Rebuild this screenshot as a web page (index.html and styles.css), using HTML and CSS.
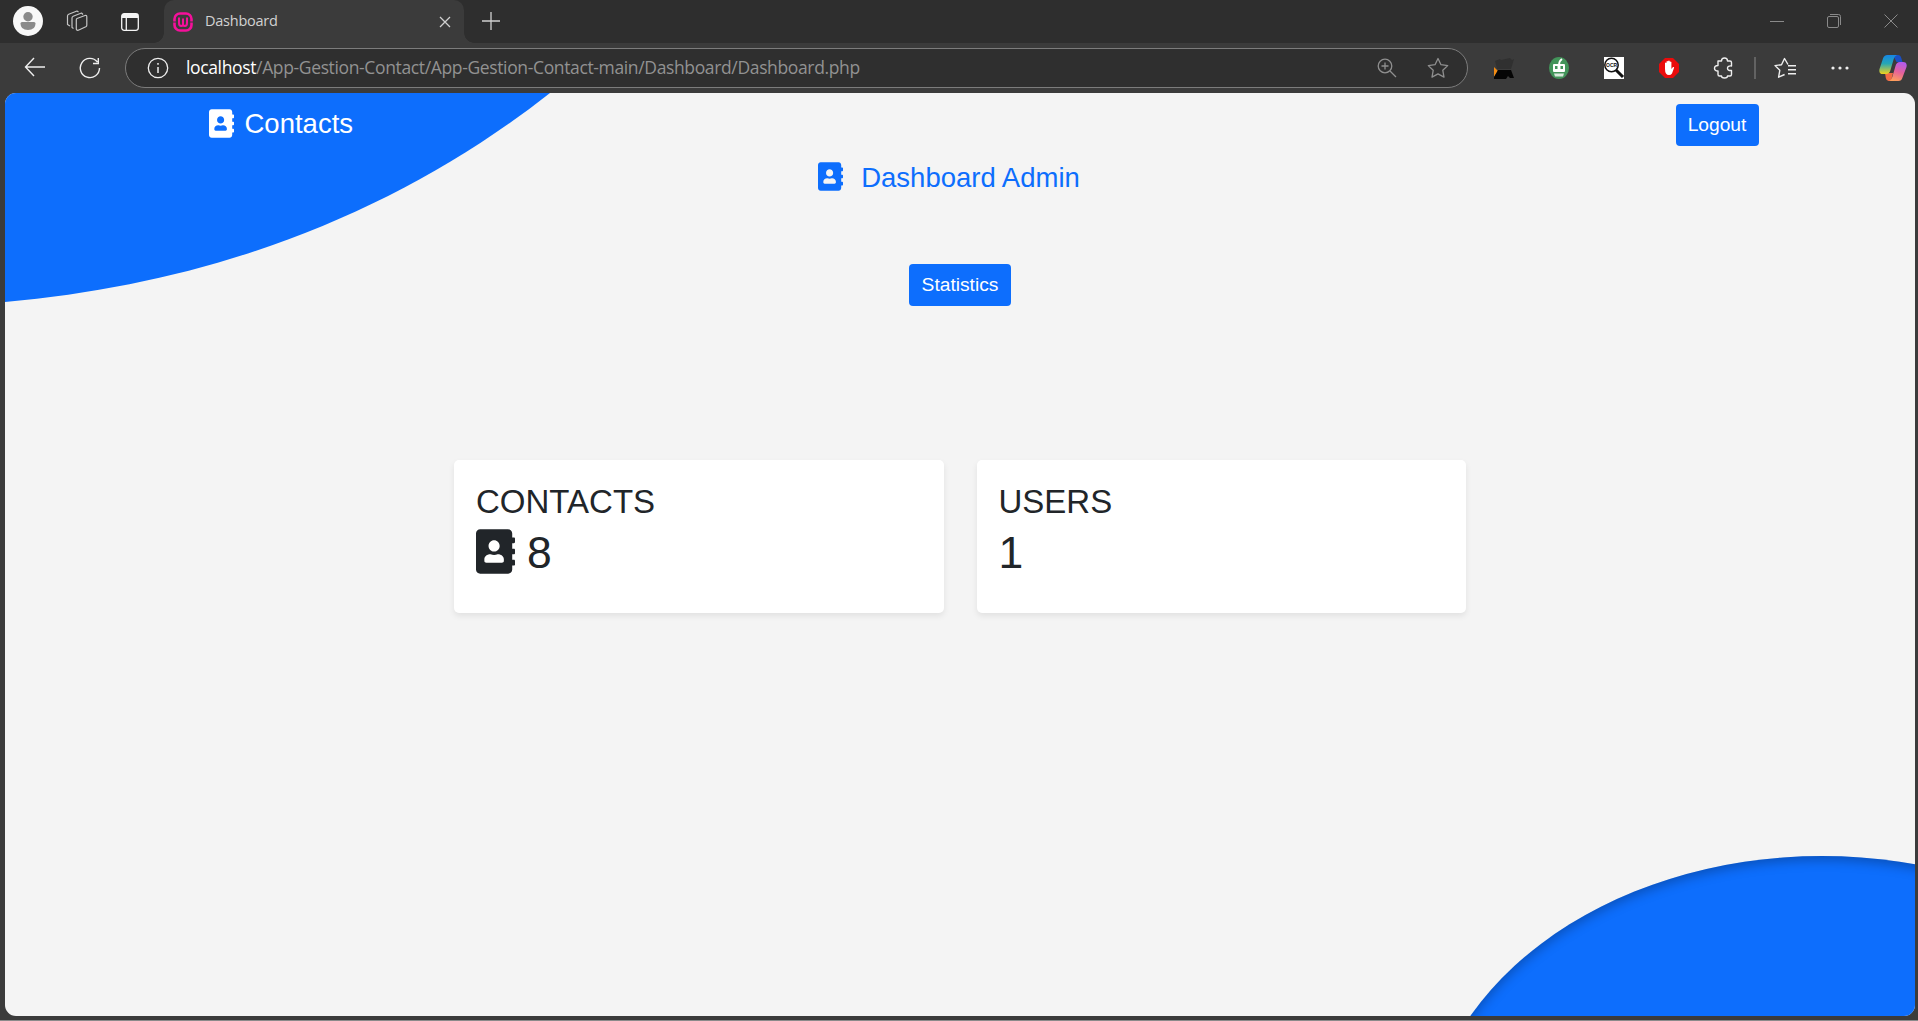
FILE: index.html
```html
<!DOCTYPE html>
<html lang="en">
<head>
<meta charset="utf-8">
<title>Dashboard</title>
<link rel="stylesheet" href="styles.css">
</head>
<body>
<svg class="defs" aria-hidden="true">
  <symbol id="contact-book" viewBox="0 0 448 512">
    <path fill="currentColor" fill-rule="evenodd" d="M436 160c6.600 0 12-5.400 12-12v-40c0-6.600-5.400-12-12-12h-20V48c0-26.500-21.500-48-48-48H48C21.500 0 0 21.500 0 48v416c0 26.500 21.500 48 48 48h320c26.500 0 48-21.500 48-48v-48h20c6.600 0 12-5.400 12-12v-40c0-6.600-5.400-12-12-12h-20v-64h20c6.600 0 12-5.400 12-12v-40c0-6.600-5.400-12-12-12h-20v-64h20zm-228-32c35.300 0 64 28.700 64 64s-28.700 64-64 64-64-28.700-64-64 28.700-64 64-64zm112 236.800c0 10.600-10 19.200-22.400 19.200H118.400C106 384 96 375.400 96 364.800v-19.200c0-31.800 30.100-57.600 67.200-57.600h5c12.300 5.100 25.700 8 39.800 8s27.600-2.900 39.800-8h5c37.100 0 67.200 25.800 67.200 57.600v19.200z"/>
  </symbol>
</svg>
<div class="tabbar">
  <span class="avatar"><svg width="30" height="30" viewBox="0 0 30 30"><circle cx="15" cy="15" r="15" fill="#f8f8f8"/><circle cx="15" cy="10.700" r="4.700" fill="#8a8a8a"/><path d="M9 16h12q1.500 0 1.500 1.500 0 6.500-7.500 6.500t-7.500-6.500Q7.500 16 9 16z" fill="#8a8a8a"/></svg></span>
  <svg class="workspaces" width="22" height="22" viewBox="0 0 22 22" fill="none" stroke="#c5c5c5" stroke-width="1.200" stroke-linejoin="round"><path d="M11 8.500l8-3q1.800-.4 1.800 1.200v8.500q0 1-1 1.500l-7.500 3.500q-2 .5-2-1.500v-9q0-.8.700-1.200zM7.500 18.500l-1.500-1V8q0-1.300 1.200-1.800L15.500 3l1.500 1.500M4 16l-2.500-1.500V6q0-1.200 1.200-1.700L11 1l1.500 1"/></svg>
  <svg class="tabs-icon" width="18" height="18" viewBox="0 0 18 18" fill="none" stroke="#f5f5f5" stroke-width="1.300"><rect x=".7" y=".7" width="16.600" height="16.600" rx="2.500"/><path d="M1 3h16" stroke-width="4"/><path d="M5.300 5v12"/></svg>
  <div class="tab">
    <svg width="20" height="20" viewBox="0 0 20 20" fill="none" stroke="#f5109b"><rect x="1.500" y="1.500" width="17" height="17" rx="5.500" stroke-width="2.600"/><path d="M6 5.500v5.500q0 3 2.200 3 1.800 0 1.800-2.500V6.500v5q0 2.500 1.800 2.500 2.200 0 2.200-3V5.500" stroke-width="2"/><path d="M0 10h3m14 0h3" stroke="#3b3b3b"/></svg>
    <span class="tab-title">Dashboard</span>
    <svg width="12" height="12" viewBox="0 0 12 12" stroke="#d0d0d0" stroke-width="1.300"><path d="M1 1l10 10M11 1L1 11"/></svg>
  </div>
  <svg class="new-tab" width="18" height="18" viewBox="0 0 18 18" stroke="#d0d0d0" stroke-width="1.300"><path d="M9 0v18M0 9h18"/></svg>
  <div class="window-controls">
    <svg width="14" height="14" viewBox="0 0 14 14" stroke="#8a8a8a"><path d="M0 7.500h14"/></svg>
    <svg width="14" height="14" viewBox="0 0 14 14" fill="none" stroke="#8a8a8a"><rect x=".5" y="2.500" width="11" height="11" rx="1.500"/><path d="M3 .5h8.500q2 0 2 2V11"/></svg>
    <svg width="14" height="14" viewBox="0 0 14 14" stroke="#8a8a8a"><path d="M.5.500l13 13M13.500.500l-13 13"/></svg>
  </div>
</div>
<div class="toolbar">
  <svg class="back" width="22" height="20" viewBox="0 0 22 20" fill="none" stroke="#eee" stroke-width="1.400"><path d="M10 1L1.500 10l8.500 9M1.500 10H21"/></svg>
  <svg class="reload" width="22" height="22" viewBox="0 0 22 22" fill="none" stroke="#eee" stroke-width="1.400"><path d="M20.500 11A9.600 9.600 0 1 1 18.400 5M19.300 1v5.500H14"/></svg>
  <div class="address">
    <svg width="22" height="22" viewBox="0 0 22 22" fill="none" stroke="#eee" stroke-width="1.300"><circle cx="11" cy="11" r="9.700"/><path d="M11 10v6M11 6v1.800" stroke-width="1.500"/></svg>
    <span class="url"><b>localhost</b>/App-Gestion-Contact/App-Gestion-Contact-main/Dashboard/Dashboard.php</span>
    <svg class="magnify" width="20" height="20" viewBox="0 0 20 20" fill="none" stroke="#8f8f8f" stroke-width="1.300"><circle cx="8" cy="8" r="6.800"/><path d="M13 13l6 6M8 4.500v7M4.500 8h7"/></svg>
    <svg width="22" height="22" viewBox="0 0 22 22" fill="none" stroke="#8f8f8f" stroke-width="1.300" stroke-linejoin="round"><path d="M11 1.500l3 6.200 6.700.9-4.900 4.700 1.200 6.800-6-3.200-6 3.200 1.200-6.800L1.300 8.600 8 7.700z"/></svg>
  </div>
  <div class="extensions">
    <svg width="22" height="22" viewBox="0 0 22 22"><path d="M2 4l5-2 1 1 9-2 2 2 2-1-3 10H4z" fill="#303030"/><path d="M1 10l4 4-4 6z" fill="#f28b13"/><path d="M5 13h13l3 8h-4l-2-2-2 3H1v-2z" fill="#050505"/></svg>
    <svg width="22" height="22" viewBox="0 0 22 22"><ellipse cx="11" cy="11" rx="10" ry="11" fill="#43945a"/><path d="M11 8q0-4 3-6" fill="none" stroke="#fff" stroke-width="1.800"/><rect x="5" y="7" width="12" height="8" rx="1" fill="#fff"/><path d="M7 9h2.500v3H7zm5.500 0H15v3h-2.500z" fill="#43945a"/><path d="M6 16.500h10l-1 3H7z" fill="#d9eadd"/></svg>
    <svg width="22" height="22" viewBox="0 0 22 22"><path d="M1 0h20v22H1z" fill="#fff"/><circle cx="8.500" cy="8" r="6.700" fill="none" stroke="#111" stroke-width="1.500"/><path d="M13 13l7 7" stroke="#111" stroke-width="3"/><text x="3" y="9.500" class="ocr">OCR</text></svg>
    <svg width="22" height="22" viewBox="0 0 22 22"><path d="M7 1h8l6 6v8l-6 6H7l-6-6V7z" fill="#ea0b0b"/><path d="M7 12V6q.7-1 1.500 0V4.500q.8-1 1.600 0V4q.9-1 1.700 0v1q.8-1 1.600 0v7l1.600-2q1.500-.5 1 1L14 16.500Q13 18 11 18q-4 0-4-6z" fill="#fff"/></svg>
    <svg width="22" height="22" viewBox="0 0 22 22" fill="none" stroke="#eee" stroke-width="1.400" stroke-linejoin="round"><path d="M5 4h3.500q0-3 3-3t3 3H17q1.500 0 1.500 1.500V9q-4-.5-4 2.200t4 2.300v4q0 1.500-1.500 1.500h-2.500q0 2-3 2t-3-2H6.500Q5 19 5 17.500V14q-3.500 0-3.500-2.700T5 8.500z"/></svg>
  </div>
  <span class="divider"></span>
  <svg class="favorites" width="22" height="22" viewBox="0 0 22 22" fill="none" stroke="#eee" stroke-width="1.400" stroke-linejoin="round"><path d="M14 7.500L10.500 1.500 7.500 7.700l-6.500.9 4.800 4.700-1.200 6.900 6-2.700M14 8.700h8M14 12.700h8M14 16.700h8"/></svg>
  <svg class="more" width="18" height="4" viewBox="0 0 18 4" fill="#eee"><circle cx="2" cy="2" r="1.600"/><circle cx="9" cy="2" r="1.600"/><circle cx="16" cy="2" r="1.600"/></svg>
  <svg class="copilot" width="28" height="28" viewBox="0 0 28 28">
    <defs>
      <linearGradient id="cool" x1="0" y1="0" x2="0" y2="1"><stop offset="0" stop-color="#1686e5"/><stop offset=".45" stop-color="#25a7b5"/><stop offset="1" stop-color="#f0d21c"/></linearGradient>
      <linearGradient id="warm" x1=".6" y1="0" x2=".3" y2="1"><stop offset="0" stop-color="#b45be9"/><stop offset=".5" stop-color="#e5629a"/><stop offset="1" stop-color="#ffa05a"/></linearGradient>
    </defs>
    <path d="M14 1h5q2.500 0 3.300 3l1.200 4h-6z" fill="#1a4fc4"/>
    <path d="M6 19h8l-2 8H9.500q-2 0-2.700-3z" fill="#f26b45"/>
    <path d="M8.500 1H18q-2.500 1-3.300 4l-3.200 11q-1 4-4.500 4H4Q-.5 20 .5 15L4 4.500Q5 1 8.500 1z" fill="url(#cool)"/>
    <path d="M19.500 27H10q2.500-1 3.300-4l3.200-11q1-4 4.500-4h3q4.500 0 3.500 5L23.500 23.500q-1 3.500-4 3.500z" fill="url(#warm)"/>
  </svg>
</div>
<main class="page">
  <svg class="corner-shape" width="560" height="220" viewBox="0 0 560 220"><path d="M0 0H545C396 117 214 190 0 209z" fill="#0d6efd"/></svg>
  <div class="ellipse"></div>
  <nav class="navbar">
    <a class="brand"><svg class="brand-icon"><use href="#contact-book"/></svg>Contacts</a>
    <a class="btn">Logout</a>
  </nav>
  <h1 class="heading"><svg class="heading-icon"><use href="#contact-book"/></svg>Dashboard Admin</h1>
  <a class="btn statistics">Statistics</a>
  <section class="cards">
    <article class="card"><h2>CONTACTS</h2><p><svg class="count-icon"><use href="#contact-book"/></svg>8</p></article>
    <article class="card"><h2>USERS</h2><p>1</p></article>
  </section>
</main>
</body>
</html>
```
FILE: styles.css
```css
* { box-sizing: border-box; }
body {
  margin: 0;
  height: 1021px;
  overflow: hidden;
  background: #3b3b3b;
  border-bottom: 1px solid #8b8b8b;
  font-family: "Liberation Sans", Arial, sans-serif;
  color: #212529;
}
svg { display: block; flex: none; }
.defs { position: absolute; width: 0; height: 0; }
.tabbar { display: flex; align-items: center; height: 43px; padding-left: 13px; background: #2e2e2e; }
.avatar { margin: 0 23px 1px 0; }
.workspaces { margin: 0 33px 1px 0; }
.tabs-icon { margin-right: 25px; }
.tab {
  position: relative;
  display: flex;
  align-items: center;
  width: 300px;
  height: 43px;
  padding: 0 13px 0 9px;
  background: #3b3b3b;
  border-radius: 10px 10px 0 0;
}
.tab::before, .tab::after {
  content: "";
  position: absolute;
  bottom: 0;
  width: 10px;
  height: 10px;
}
.tab::before { left: -10px; background: radial-gradient(circle at 0 0, transparent 9.5px, #3b3b3b 10px); }
.tab::after { right: -10px; background: radial-gradient(circle at 100% 0, transparent 9.5px, #3b3b3b 10px); }
.tab-title { flex: 1; margin-left: 12px; padding-bottom: 3px; font: 14.500px "Open Sans", "Noto Sans", sans-serif; letter-spacing: -.25px; color: #d2d2d2; }
.new-tab { margin-left: 18px; margin-bottom: 2px; }
.window-controls { display: flex; gap: 43px; margin: 0 20px 1px auto; }
.toolbar { display: flex; align-items: center; height: 50px; padding-left: 24px; }
.back { margin: 0 33px 2px 0; }
.reload { margin-right: 24px; }
.address {
  display: flex;
  align-items: center;
  width: 1343px;
  height: 40px;
  padding: 0 18px 0 21px;
  border: 1px solid #7c7c7c;
  border-radius: 20px;
  background: #2f2f2f;
}
.url { flex: 1; margin-left: 17px; padding-bottom: 2px; white-space: nowrap; font: 17.500px "Open Sans", "Noto Sans", sans-serif; letter-spacing: -.36px; color: #929292; }
.url b { font-weight: 400; color: #fff; }
.magnify { margin-right: 30px; }
.extensions { display: flex; gap: 33px; margin-left: 25px; }
.divider { width: 2px; height: 22px; margin-left: 19px; background: #626262; }
.favorites { margin-left: 18px; }
.more { margin-left: 35px; }
.copilot { margin-left: 30px; }
.ocr { font: 700 5px "Liberation Sans", sans-serif; fill: #111; }
.page {
  position: relative;
  display: flex;
  flex-direction: column;
  align-items: center;
  width: 1910px;
  height: 923px;
  margin-left: 5px;
  overflow: hidden;
  border-radius: 11px;
  background: #f4f4f4;
}
.corner-shape { position: absolute; left: 0; top: 0; }
.ellipse {
  position: absolute;
  left: 1419px;
  top: 763px;
  width: 796px;
  height: 602px;
  border-radius: 50%;
  background: #0d6efd;
  box-shadow: inset 0 4px 12px rgba(0, 0, 0, .27);
}
.navbar { position: relative; display: flex; align-items: center; justify-content: space-between; width: 1597px; height: 64px; }
.brand { display: flex; align-items: center; margin: 0 0 2px 47px; font-size: 27.500px; color: #fff; }
.brand-icon { width: 25px; height: 29px; margin: 0 11px 1px 0; }
.btn { display: flex; align-items: center; justify-content: center; width: 83px; height: 42px; border-radius: 4px; background: #0d6efd; color: #fff; font-size: 19.200px; }
.heading { display: flex; align-items: center; height: 41px; margin: 0 22px 0 0; font-size: 27.500px; font-weight: 400; color: #0d6efd; }
.heading-icon { width: 25px; height: 29px; margin: 0 18px 3px 0; }
.statistics { width: 102px; margin-top: 66px; }
.cards { display: flex; gap: 33px; margin-top: 154px; }
.card { width: 489.500px; height: 153px; padding: 22px; border-radius: 5px; background: #fff; box-shadow: 0 3px 6px rgba(0, 0, 0, .08); }
.card h2 { margin: 0; line-height: 40px; font-size: 33px; font-weight: 400; }
.card p { display: flex; align-items: center; height: 61px; margin: 0; font-size: 44.500px; }
.count-icon { width: 39px; height: 45px; margin: 0 12px 3px 0; }
```
